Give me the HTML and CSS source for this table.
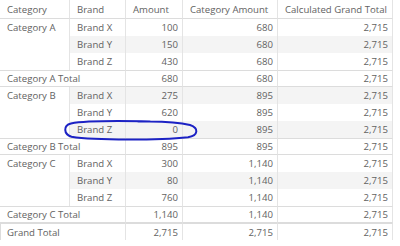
FILE: index.html
```html
<!DOCTYPE html>
<html>
<head>
<meta charset="utf-8">
<link rel="stylesheet" href="styles.css">
</head>
<body>
<div class="page">
  <div class="matrix">
    <div class="c hd">Category</div>
    <div class="c hd">Brand</div>
    <div class="c hd">Amount</div>
    <div class="c hd">Category Amount</div>
    <div class="c hd">Calculated Grand Total</div>

    <div class="c cat">Category A</div>
    <div class="c">Brand X</div><div class="c n">100</div><div class="c n">680</div><div class="c n">2,715</div>
    <div class="c alt">Brand Y</div><div class="c n alt">150</div><div class="c n alt">680</div><div class="c n alt">2,715</div>
    <div class="c">Brand Z</div><div class="c n">430</div><div class="c n">680</div><div class="c n">2,715</div>
    <div class="c tot lbl">Category A Total</div><div class="c n tot">680</div><div class="c n tot">680</div><div class="c n tot">2,715</div>

    <div class="c cat">Category B</div>
    <div class="c alt">Brand X</div><div class="c n alt">275</div><div class="c n alt">895</div><div class="c n alt">2,715</div>
    <div class="c">Brand Y</div><div class="c n">620</div><div class="c n">895</div><div class="c n">2,715</div>
    <div class="c alt">Brand Z</div><div class="c n alt">0</div><div class="c n alt">895</div><div class="c n alt">2,715</div>
    <div class="c tot lbl">Category B Total</div><div class="c n tot">895</div><div class="c n tot">895</div><div class="c n tot">2,715</div>

    <div class="c cat">Category C</div>
    <div class="c">Brand X</div><div class="c n">300</div><div class="c n">1,140</div><div class="c n">2,715</div>
    <div class="c alt">Brand Y</div><div class="c n alt">80</div><div class="c n alt">1,140</div><div class="c n alt">2,715</div>
    <div class="c">Brand Z</div><div class="c n">760</div><div class="c n">1,140</div><div class="c n">2,715</div>
    <div class="c tot lbl">Category C Total</div><div class="c n tot">1,140</div><div class="c n tot">1,140</div><div class="c n tot">2,715</div>

    <div class="c grand lbl first">Grand Total</div><div class="c n grand">2,715</div><div class="c n grand">2,715</div><div class="c n grand">2,715</div>
  </div>
  <svg class="ink" width="400" height="246" viewBox="0 0 400 246">
    <path d="M150 121.5 C120 120.8 84 121 71 123.5 C63 125.5 63.5 134 71.5 136.8 C95 140.5 160 140.2 188 137.2 C198.5 135.5 199 128 190 125 C178 122 162 121 138 121.6" fill="none" stroke="#1c22c4" stroke-width="2" stroke-linecap="round"/>
  </svg>
</div>
</body>
</html>
```
FILE: styles.css
```css
html, body {
  margin: 0;
  padding: 0;
  background: #ffffff;
}
.page {
  position: relative;
  width: 400px;
  height: 246px;
}
.matrix {
  display: grid;
  grid-template-columns: 70px 56px 57px 95px 115px;
  grid-template-rows: 19px;
  grid-auto-rows: 17px;
  width: 393px;
  font-family: "Open Sans", "Noto Sans", sans-serif;
  font-size: 9.6px;
  color: #626262;
}
.c {
  display: flex;
  align-items: center;
  box-sizing: border-box;
  padding: 0 4px 0 7px;
  border-right: 1px solid #e4e4e4;
  white-space: nowrap;
  overflow: hidden;
}
.n {
  justify-content: flex-end;
}
.hd {
  border-bottom: 1px solid #dcdcdc;
}
.cat {
  grid-row: span 3;
  align-items: flex-start;
  padding-top: 2px;
}
.alt {
  background: #f4f4f4;
}
.tot {
  border-top: 1px solid #dcdcdc;
  border-bottom: 1px solid #dcdcdc;
}
.lbl {
  grid-column: span 2;
}
.grand {
  border-top: 1px solid #dcdcdc;
}
.first {
  border-left: 1px solid #dcdcdc;
  padding-left: 6px;
}
.ink {
  position: absolute;
  left: 0;
  top: 0;
  pointer-events: none;
}
```
